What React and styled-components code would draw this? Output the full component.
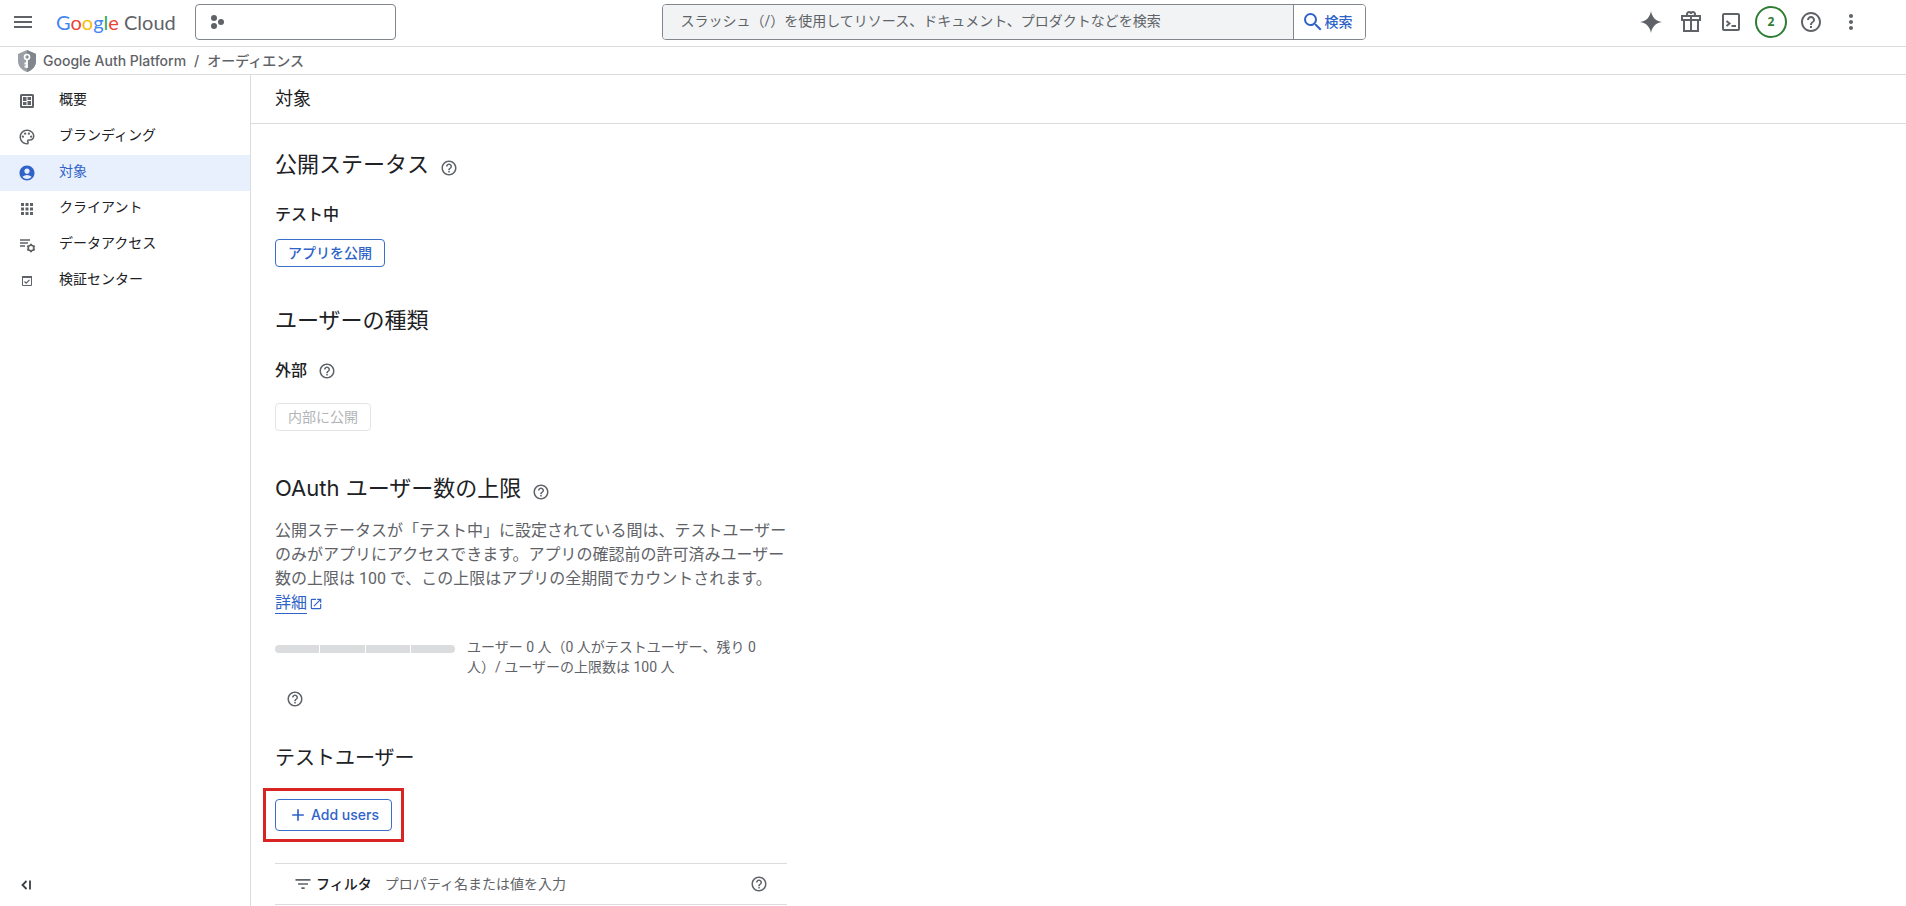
import React, { useState } from 'react';
import styled, { createGlobalStyle } from 'styled-components';
import {
  MdAccountCircle,
  MdAdd,
  MdApps,
  MdFilterList,
  MdHelpOutline,
  MdMenu,
  MdMoreVert,
  MdOpenInNew,
  MdOutlinePalette,
  MdSearch,
} from 'react-icons/md';

const GlobalStyle = createGlobalStyle`
  * {
    box-sizing: border-box;
  }

  body {
    margin: 0;
    background: #fff;
    color: #202124;
    font-family: Roboto, 'Noto Sans CJK JP', sans-serif;
    font-size: 14px;
    line-height: 20px;
  }

  button,
  input {
    font: inherit;
  }
`;

const Page = styled.div`
  display: flex;
  flex-direction: column;
  height: 100vh;
  overflow: hidden;
`;

const Header = styled.header`
  display: flex;
  flex: none;
  align-items: center;
  justify-content: space-between;
  height: 47px;
  padding: 0 35px 2px 4px;
  border-bottom: 1px solid #dadce0;
`;

const HeaderGroup = styled.div`
  display: flex;
  align-items: center;
`;

const IconButton = styled.button`
  display: flex;
  align-items: center;
  justify-content: center;
  width: ${(props) => props.$size || 40}px;
  height: ${(props) => props.$size || 40}px;
  padding: 0;
  border: none;
  border-radius: 50%;
  background: none;
  color: #5f6368;
  cursor: pointer;
`;

const Logo = styled.a`
  width: 139px;
  padding-left: 14px;
  color: #5f6368;
  font-family: Lato, sans-serif;
  font-size: 20px;
  line-height: 28px;
  text-decoration: none;
  white-space: nowrap;
`;

const LogoLetter = styled.span`
  color: ${(props) => props.$color};
`;

const ProjectPicker = styled.button`
  display: flex;
  align-items: center;
  width: 201px;
  height: 36px;
  margin-left: 14px;
  padding: 0 14px;
  border: 1px solid #80868b;
  border-radius: 4px;
  background: #fff;
  color: #5f6368;
  cursor: pointer;
`;

const SearchForm = styled.form`
  display: flex;
  width: 704px;
  height: 36px;
  overflow: hidden;
  border: 1px solid #80868b;
  border-radius: 4px;
`;

const SearchInput = styled.input`
  flex: 1;
  min-width: 0;
  padding: 0 18px 2px;
  border: none;
  background: #f1f3f4;
  color: #202124;

  &::placeholder {
    color: #5f6368;
    opacity: 1;
  }
`;

const SearchButton = styled.button`
  display: flex;
  align-items: center;
  width: 72px;
  padding: 0 7px;
  border: none;
  border-left: 1px solid #80868b;
  background: #fff;
  color: #3063c8;
  font-weight: 500;
  white-space: nowrap;
  cursor: pointer;
`;

const Badge = styled.span`
  display: flex;
  align-items: center;
  justify-content: center;
  width: 32px;
  height: 32px;
  border: 2px solid #2e7d32;
  border-radius: 50%;
  color: #2e7d32;
  font-family: 'Open Sans', sans-serif;
  font-size: 12px;
  font-weight: 700;
`;

const Breadcrumbs = styled.nav`
  display: flex;
  flex: none;
  align-items: center;
  height: 28px;
  padding: 0 17px;
  border-bottom: 1px solid #dadce0;
  color: #5f6368;
  font-family: Inter, 'Noto Sans CJK JP', sans-serif;
  font-weight: 500;
`;

const Crumb = styled.a`
  color: inherit;
  text-decoration: none;
`;

const ProductCrumb = styled(Crumb)`
  display: flex;
  align-items: center;
  gap: 6px;
`;

const CrumbDivider = styled.span`
  padding: 0 8px;
`;

const Body = styled.div`
  display: flex;
  flex: 1;
  min-height: 0;
`;

const Sidebar = styled.nav`
  display: flex;
  flex: none;
  flex-direction: column;
  justify-content: space-between;
  width: 251px;
  padding: 8px 0;
  border-right: 1px solid #dadce0;
`;

const NavList = styled.ul`
  margin: 0;
  padding: 0;
  list-style: none;
`;

const NavLink = styled.a`
  display: flex;
  align-items: center;
  gap: 23px;
  height: 36px;
  padding: 0 18px;
  background: ${(props) => (props.$active ? '#e8f0fe' : 'none')};
  color: ${(props) => (props.$active ? '#3063c8' : '#202124')};
  text-decoration: none;

  svg {
    color: ${(props) => (props.$active ? '#3063c8' : '#5f6368')};
  }
`;

const NavLabel = styled.span`
  padding-bottom: 4px;
`;

const CollapseButton = styled(IconButton)`
  margin-left: 14px;
`;

const Main = styled.main`
  flex: 1;
  min-width: 0;
  overflow: hidden;
`;

const TitleBar = styled.div`
  display: flex;
  align-items: center;
  height: 49px;
  padding: 0 24px;
  border-bottom: 1px solid #dadce0;
`;

const Title = styled.h1`
  margin: 0;
  font-size: 18px;
  font-weight: 400;
  line-height: 24px;
`;

const Content = styled.div`
  max-width: 560px;
  padding: 27px 24px;
`;

const Section = styled.section`
  margin-bottom: ${(props) => props.$gap || 40}px;
`;

const HeadingRow = styled.div`
  display: flex;
  align-items: flex-end;
  gap: 11px;
`;

const Heading = styled.h2`
  margin: 0;
  font-family: Inter, 'Noto Sans CJK JP', sans-serif;
  font-size: ${(props) => (props.$small ? 20 : 22)}px;
  font-weight: 400;
  line-height: 26px;
`;

const Status = styled.h3`
  margin: 0;
  font-size: 16px;
  font-weight: 500;
  line-height: 24px;
`;

const StatusRow = styled.div`
  display: flex;
  align-items: center;
  gap: 11px;
  margin: 26px 0 ${(props) => props.$gap}px;
`;

const HelpButton = styled(IconButton).attrs({ $size: 18, 'aria-label': 'ヘルプ' })``;

const OutlineButton = styled.button`
  display: flex;
  align-items: center;
  gap: 3px;
  height: ${(props) => (props.$tall ? 32 : 28)}px;
  padding: 0 12px;
  border: 1px solid #3b6fc9;
  border-radius: 4px;
  background: #fff;
  color: #3063c8;
  font-weight: 500;
  white-space: nowrap;
  cursor: pointer;

  &:disabled {
    border-color: #e3e4e6;
    color: #b3b5b8;
    font-weight: 400;
    cursor: default;
  }
`;

const AddButton = styled(OutlineButton)`
  font-family: Inter, sans-serif;
`;

const Description = styled.p`
  margin: 18px 0 0;
  color: #5f6368;
  font-size: 16px;
  line-height: 24px;
`;

const DetailLink = styled.a`
  display: inline-flex;
  align-items: center;
  gap: 2px;
  color: #3063c8;
  text-decoration: none;
`;

const DetailText = styled.span`
  border-bottom: 1px solid #3063c8;
  line-height: 20px;
`;

const Quota = styled.div`
  display: flex;
  align-items: flex-start;
  gap: 12px;
  margin: 22px 0 13px;
  color: #5f6368;
`;

const QuotaBar = styled.div`
  display: grid;
  flex: none;
  grid-template-columns: repeat(4, 1fr);
  gap: 1px;
  width: 180px;
  height: 8px;
  margin-top: 8px;
  overflow: hidden;
  border-radius: 4px;
`;

const QuotaStep = styled.span`
  background: #dadcdd;
`;

const QuotaText = styled.p`
  max-width: 300px;
  margin: 0;
`;

const QuotaHelp = styled.div`
  padding-left: 11px;
`;

const Highlight = styled.div`
  width: fit-content;
  margin: 17px 0 21px -12px;
  padding: 8px 9px;
  border: 3px solid #d92424;
`;

const FilterBar = styled.div`
  display: flex;
  align-items: center;
  height: 42px;
  padding: 0 19px 0 18px;
  border: solid #dadce0;
  border-width: 1px 0;
  color: #5f6368;
`;

const FilterLabel = styled.label`
  display: flex;
  align-items: center;
  gap: 3px;
  color: #202124;
  font-weight: 500;

  svg {
    color: #5f6368;
  }
`;

const FilterInput = styled.input`
  flex: 1;
  min-width: 0;
  padding: 0 13px;
  border: none;
  outline: none;
  background: none;
  color: #202124;

  &::placeholder {
    color: #5f6368;
    opacity: 1;
  }
`;

const ProjectIcon = () => (
  <svg width="16" height="16" viewBox="0 0 16 16" fill="currentColor" aria-hidden="true">
    <circle cx="4" cy="4" r="3" />
    <circle cx="11" cy="8" r="3" />
    <circle cx="4" cy="12" r="3" />
  </svg>
);

const SparkIcon = () => (
  <svg width="22" height="22" viewBox="0 0 22 22" fill="currentColor" aria-hidden="true">
    <path d="M11 0c1 6 4.500 10 11 11c-6.500 1-10 5-11 11c-1-6-4.500-10-11-11c6.500-1 10-5 11-11z" />
  </svg>
);

const GiftIcon = () => (
  <svg width="20" height="22" viewBox="0 0 20 22" fill="none" stroke="currentColor" strokeWidth="2" aria-hidden="true">
    <path d="M1 5h18v4H1zM3 9v11h14V9M10 5v15M10 5H7.500a2 2 0 1 1 2.500-2a2 2 0 1 1 2.500 2z" />
  </svg>
);

const ShellIcon = () => (
  <svg width="18" height="18" viewBox="0 0 18 18" fill="none" stroke="currentColor" strokeWidth="2" aria-hidden="true">
    <rect x="1" y="1" width="16" height="16" rx="1" />
    <path d="M4.500 8l3 2.500l-3 2.500M9.500 13H14" />
  </svg>
);

const ShieldIcon = () => (
  <svg width="20" height="22" viewBox="0 0 20 22" aria-hidden="true">
    <path d="M10 0L1 4v7c0 5 3.500 9 9 11c5.500-2 9-6 9-11V4z" fill="#9aa0a6" />
    <path d="M10 0l9 4v7c0 5-3.500 9-9 11z" fill="#80868b" />
    <circle cx="10" cy="7" r="2.500" fill="none" stroke="#fff" strokeWidth="1.600" />
    <path d="M10 9.500V18M10 13.500H7.500M10 16.500H7.500" fill="none" stroke="#fff" strokeWidth="1.800" />
  </svg>
);

const OverviewIcon = () => (
  <svg width="18" height="18" viewBox="0 0 18 18" fill="none" stroke="currentColor" aria-hidden="true">
    <rect x="3" y="3" width="12" height="12" rx="0.500" strokeWidth="2" />
    <path d="M5 5h3.500v4H5zM5 10h3.500v3H5zM9.500 5H13v3H9.500zM9.500 9H13v4H9.500z" fill="currentColor" stroke="none" />
  </svg>
);

const DataAccessIcon = () => (
  <svg width="18" height="18" viewBox="0 0 18 18" fill="none" stroke="currentColor" strokeWidth="1.500" aria-hidden="true">
    <path d="M2 4h10M2 7h8M2 10h5" />
    <circle cx="13" cy="12" r="2.800" strokeWidth="1.600" />
    <path d="M13 7.800v1.500M13 14.700v1.500M9.300 9.900l1.400.800M15.300 13.300l1.400.800M9.300 14.100l1.400-.800M15.300 10.700l1.400-.800" strokeWidth="2" />
  </svg>
);

const VerifyIcon = () => (
  <svg width="18" height="18" viewBox="0 0 18 18" fill="none" stroke="currentColor" aria-hidden="true">
    <path d="M4.500 4.500h9v9h-9z" />
    <path d="M4 5h10" strokeWidth="2" />
    <path d="M6.500 9.500l1.700 1.700l3.300-3.300" strokeWidth="1.300" />
  </svg>
);

const CollapseIcon = () => (
  <svg width="12" height="12" viewBox="0 0 12 12" fill="none" stroke="#3c4043" strokeWidth="1.800" aria-hidden="true">
    <path d="M6.500 1l-4 4l4 4M10 .500v9" />
  </svg>
);

const logoLetters = [
  ['G', '#4285f4'],
  ['o', '#ea4335'],
  ['o', '#fbbc04'],
  ['g', '#4285f4'],
  ['l', '#34a853'],
  ['e', '#ea4335'],
];

const navItems = [
  { label: '概要', icon: OverviewIcon },
  { label: 'ブランディング', icon: MdOutlinePalette },
  { label: '対象', icon: MdAccountCircle },
  { label: 'クライアント', icon: MdApps },
  { label: 'データアクセス', icon: DataAccessIcon },
  { label: '検証センター', icon: VerifyIcon },
];

const Help = () => (
  <HelpButton>
    <MdHelpOutline size={18} />
  </HelpButton>
);

const TopBar = () => {
  const [query, setQuery] = useState('');

  return (
    <Header>
      <HeaderGroup>
        <IconButton $size={38} aria-label="メニュー">
          <MdMenu size={24} />
        </IconButton>
        <Logo href="#">
          {logoLetters.map(([letter, color], index) => (
            <LogoLetter key={index} $color={color}>{letter}</LogoLetter>
          ))}
          {' Cloud'}
        </Logo>
        <ProjectPicker aria-label="プロジェクトを選択">
          <ProjectIcon />
        </ProjectPicker>
      </HeaderGroup>
      <SearchForm onSubmit={(e) => e.preventDefault()}>
        <SearchInput
          aria-label="検索"
          placeholder="スラッシュ（/）を使用してリソース、ドキュメント、プロダクトなどを検索"
          value={query}
          onChange={(e) => setQuery(e.target.value)}
        />
        <SearchButton type="submit">
          <MdSearch size={24} />
          検索
        </SearchButton>
      </SearchForm>
      <HeaderGroup>
        <IconButton aria-label="Gemini"><SparkIcon /></IconButton>
        <IconButton aria-label="無料トライアル"><GiftIcon /></IconButton>
        <IconButton aria-label="Cloud Shell"><ShellIcon /></IconButton>
        <IconButton aria-label="通知"><Badge>2</Badge></IconButton>
        <IconButton aria-label="ヘルプ"><MdHelpOutline size={24} /></IconButton>
        <IconButton aria-label="その他"><MdMoreVert size={24} /></IconButton>
      </HeaderGroup>
    </Header>
  );
};

const SideNav = ({ active, onSelect }) => (
  <Sidebar>
    <NavList>
      {navItems.map(({ label, icon: Icon }) => (
        <li key={label}>
          <NavLink href="#" $active={label === active} onClick={() => onSelect(label)}>
            <Icon size={18} />
            <NavLabel>{label}</NavLabel>
          </NavLink>
        </li>
      ))}
    </NavList>
    <CollapseButton $size={24} aria-label="ナビゲーションを閉じる">
      <CollapseIcon />
    </CollapseButton>
  </Sidebar>
);

const App = () => {
  const [active, setActive] = useState('対象');
  const [filter, setFilter] = useState('');

  return (
    <Page lang="ja">
      <GlobalStyle />
      <TopBar />
      <Breadcrumbs>
        <ProductCrumb href="#">
          <ShieldIcon />
          Google Auth Platform
        </ProductCrumb>
        <CrumbDivider>/</CrumbDivider>
        <Crumb href="#">オーディエンス</Crumb>
      </Breadcrumbs>
      <Body>
        <SideNav active={active} onSelect={setActive} />
        <Main>
          <TitleBar>
            <Title>対象</Title>
          </TitleBar>
          <Content>
            <Section>
              <HeadingRow>
                <Heading>公開ステータス</Heading>
                <Help />
              </HeadingRow>
              <StatusRow $gap={12}>
                <Status>テスト中</Status>
              </StatusRow>
              <OutlineButton>アプリを公開</OutlineButton>
            </Section>
            <Section $gap={44}>
              <HeadingRow>
                <Heading>ユーザーの種類</Heading>
              </HeadingRow>
              <StatusRow $gap={20}>
                <Status>外部</Status>
                <Help />
              </StatusRow>
              <OutlineButton disabled>内部に公開</OutlineButton>
            </Section>
            <Section $gap={37}>
              <HeadingRow>
                <Heading>OAuth ユーザー数の上限</Heading>
                <Help />
              </HeadingRow>
              <Description>
                公開ステータスが「テスト中」に設定されている間は、テストユーザーのみがアプリにアクセスできます。アプリの確認前の許可済みユーザー数の上限は 100 で、この上限はアプリの全期間でカウントされます。
                <DetailLink href="#">
                  <DetailText>詳細</DetailText>
                  <MdOpenInNew size={14} />
                </DetailLink>
              </Description>
              <Quota>
                <QuotaBar>
                  {[0, 1, 2, 3].map((step) => <QuotaStep key={step} />)}
                </QuotaBar>
                <QuotaText>
                  ユーザー 0 人（0 人がテストユーザー、残り 0 人）/ ユーザーの上限数は 100 人
                </QuotaText>
              </Quota>
              <QuotaHelp>
                <Help />
              </QuotaHelp>
            </Section>
            <Section>
              <Heading $small>テストユーザー</Heading>
              <Highlight>
                <AddButton $tall>
                  <MdAdd size={20} />
                  Add users
                </AddButton>
              </Highlight>
              <FilterBar>
                <FilterLabel htmlFor="user-filter">
                  <MdFilterList size={20} />
                  フィルタ
                </FilterLabel>
                <FilterInput
                  id="user-filter"
                  placeholder="プロパティ名または値を入力"
                  value={filter}
                  onChange={(e) => setFilter(e.target.value)}
                />
                <Help />
              </FilterBar>
            </Section>
          </Content>
        </Main>
      </Body>
    </Page>
  );
};

export default App;
